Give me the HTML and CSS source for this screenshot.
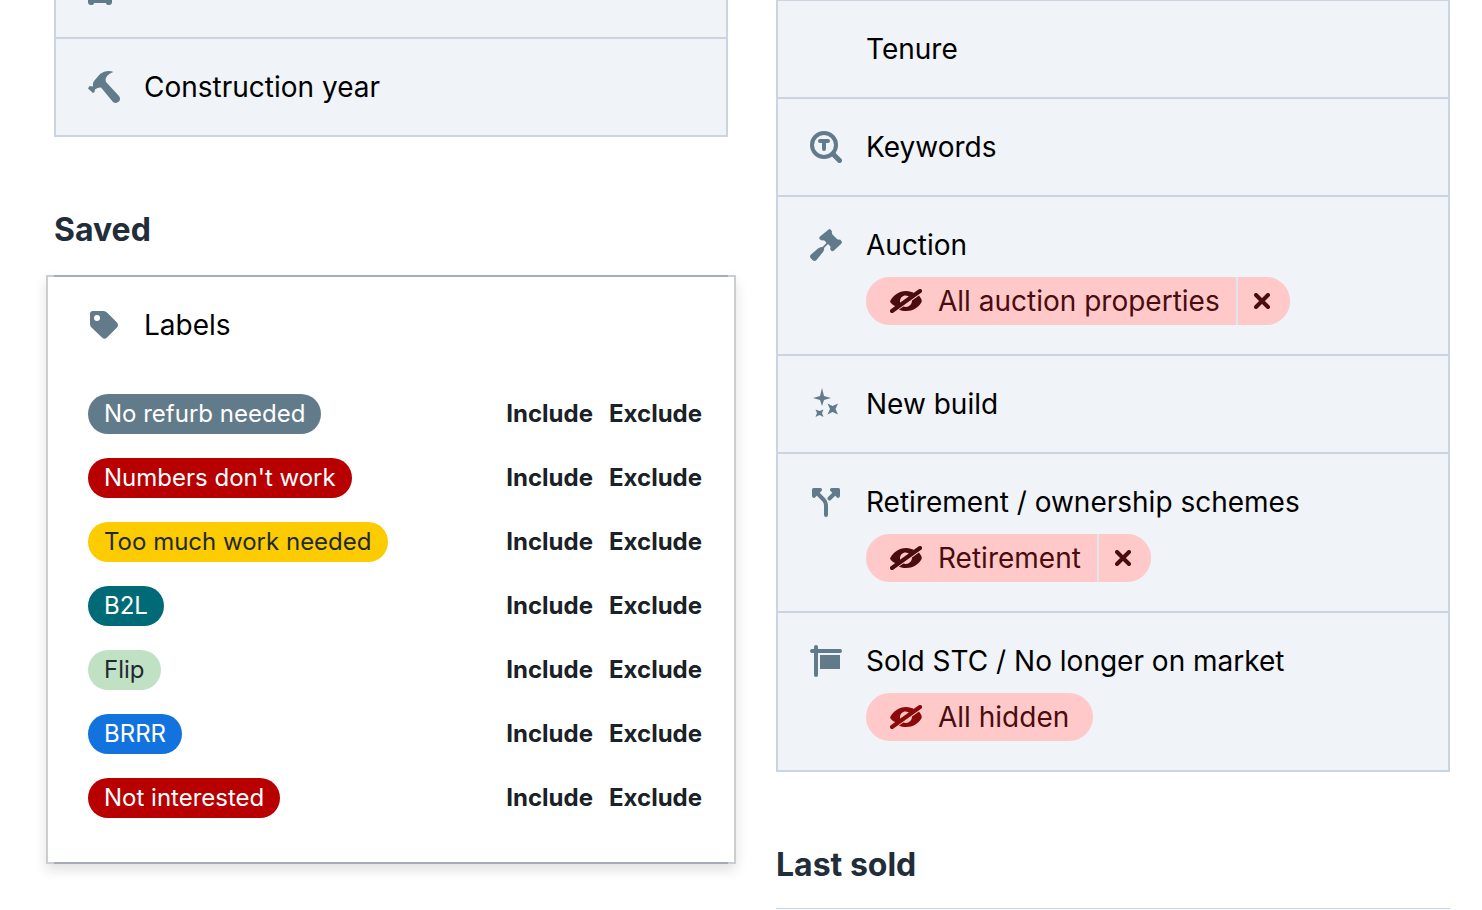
FILE: index.html
```
<!DOCTYPE html>
<html lang="en">
<head>
  <meta charset="UTF-8">
  <title>Filters</title>
  <meta name="viewport" content="width=device-width">
  <link rel="stylesheet" href="styles.css">
</head>
<body>
<svg class="sprite" aria-hidden="true">
  <symbol id="hidden" viewBox="0 0 32 24">
    <path d="M0 12.500C3 6.500 9 2 16 2C19.500 2 22 3 24 4L20 8.500C16.500 4.500 10 6.500 10 12.500L10 15L4 20L5 17C3 16 1 14.500 0 12.500Z"/>
    <path d="M29 6.500L31 9.500Q32.500 12 31 14C28 18.500 23 22 16 22C13.500 22 11 21.500 9 20.500L13.500 17.500C18 19 22 16 22 11.500Z"/>
    <path d="M2 22L30 2" fill="none" stroke="currentColor" stroke-width="4" stroke-linecap="round"/>
  </symbol>
  <symbol id="cross" viewBox="0 0 16 16">
    <path d="M2 2L14 14M14 2L2 14" fill="none" stroke="currentColor" stroke-width="4" stroke-linecap="round"/>
  </symbol>
</svg>
<main>
  <div class="column">
    <ul class="filters">
      <li>
        <svg class="icon" viewBox="0 0 32 32"><path d="M3 12L6 5Q7 3 9 3H15Q17 3 18 5L21 12Q24 14 24 17V29Q24 32 21 32Q18 32 18 30H6Q6 32 3 32Q0 32 0 29V17Q0 14 3 12Z"/></svg>
      </li>
      <li>
        <svg class="icon" viewBox="0 0 32 32"><path d="M12 3Q16 0 20 0Q24 0 25.500 1Q20 3 18.500 6Q17 8 18 11L31 25Q33 28 31 30.500Q28 33 25 31L13 16.500Q10 16 7 18.500L6.500 21L5 22L0 17.500L1.500 15L5 15.500Q4.500 12 6 10Z"/></svg>
        <h3>Construction year</h3>
      </li>
    </ul>
    <h2>Saved</h2>
    <section class="labels">
      <header>
        <svg class="icon" viewBox="0 0 32 32"><path fill-rule="evenodd" d="M5 2H15.500Q17.500 2 19 3.500L29 13.500Q31 16 29 18.500L19 28.500Q16.500 31 14 28.500L3.500 18.500Q2 17 2 15V5Q2 2 5 2ZM9 6A3 3 0 1 0 9 12A3 3 0 1 0 9 6Z"/></svg>
        <h3>Labels</h3>
      </header>
      <ul>
        <li><span class="label slate">No refurb needed</span><button>Include</button><button>Exclude</button></li>
        <li><span class="label red">Numbers don't work</span><button>Include</button><button>Exclude</button></li>
        <li><span class="label yellow">Too much work needed</span><button>Include</button><button>Exclude</button></li>
        <li><span class="label teal">B2L</span><button>Include</button><button>Exclude</button></li>
        <li><span class="label green">Flip</span><button>Include</button><button>Exclude</button></li>
        <li><span class="label blue">BRRR</span><button>Include</button><button>Exclude</button></li>
        <li><span class="label red">Not interested</span><button>Include</button><button>Exclude</button></li>
      </ul>
    </section>
  </div>

  <div class="column right">
    <ul class="filters">
      <li>
        <span class="icon"></span>
        <h3>Tenure</h3>
      </li>
      <li>
        <svg class="icon" viewBox="0 0 32 32"><g fill="none" stroke="currentColor" stroke-width="4" stroke-linecap="round"><circle cx="14" cy="14" r="12"/><path d="M23 23L29.500 29.500" stroke-width="5"/><path d="M10 10H18M14 10V18"/></g></svg>
        <h3>Keywords</h3>
      </li>
      <li>
        <svg class="icon" viewBox="0 0 32 32"><path d="M18 1Q19.500 -1 21 1L22 2.500Q21.500 4 22.500 5.500L27 10Q28.500 11 30 10.500L31.500 12Q32.500 13.500 31 15L24 21.500Q22.500 23 21 21.500L20 20Q21 18.500 20 17L18 15L14 19Q14.500 21 13 23L6.500 31Q4.500 33 2.500 31L1 29.500Q-1 27.500 1 25.500L8 19.500Q10.500 17.500 12.500 18L16.500 14L15 12Q13.500 11 12 11.500L10 10.500Q8.500 9 10 7.500Z"/></svg>
        <div>
          <h3>Auction</h3>
          <div class="chip">
            <span><svg class="eye"><use href="#hidden"/></svg>All auction properties</span>
            <button aria-label="Remove"><svg class="cross"><use href="#cross"/></svg></button>
          </div>
        </div>
      </li>
      <li>
        <svg class="icon" viewBox="0 0 32 32"><path d="M12 0L14 8L21 10L14 12L12 18L10 12L3 10L10 8ZM17.500 15.500L22.500 18L28 15.500L25.500 21L28 26.500L22.500 24L17.500 26.500L20 21ZM5.500 21.500L9.500 23L13.500 21.500L12 25L13.500 29L9.500 27L5.500 29L7 25Z"/></svg>
        <h3>New build</h3>
      </li>
      <li>
        <svg class="icon" viewBox="0 0 32 32"><path d="M3.500 2H10.500Q13 3 11.500 5L4.500 12Q2 12 2 10V3.500Q2 2 3.500 2ZM28.500 2H21.500Q19 3 20.500 5L27.500 12Q30 12 30 10V3.500Q30 2 28.500 2Z"/><path d="M6 6L13.500 13.500Q16 16 16 19V29M19.500 12.500L26 6" fill="none" stroke="currentColor" stroke-width="4" stroke-linecap="round"/></svg>
        <div>
          <h3>Retirement / ownership schemes</h3>
          <div class="chip">
            <span><svg class="eye"><use href="#hidden"/></svg>Retirement</span>
            <button aria-label="Remove"><svg class="cross"><use href="#cross"/></svg></button>
          </div>
        </div>
      </li>
      <li>
        <svg class="icon" viewBox="0 0 32 32"><rect x="4" width="4" height="32" rx="2"/><rect y="4" width="32" height="4" rx="2"/><rect x="10" y="10" width="20" height="14"/></svg>
        <div>
          <h3>Sold STC / No longer on market</h3>
          <div class="chip all">
            <span><svg class="eye"><use href="#hidden"/></svg>All hidden</span>
          </div>
        </div>
      </li>
    </ul>
    <h2>Last sold</h2>
    <hr>
  </div>
</main>
</body>
</html>
```
FILE: styles.css
```
* {
  box-sizing: border-box;
}

body {
  font-family: Inter, "Liberation Sans", sans-serif;
  font-size: 28px;
  line-height: 32px;
  margin: 0;
  background: #fff;
  color: #000;
  overflow: hidden;
}

ul {
  list-style: none;
  margin: 0;
  padding: 0;
}

h2 {
  margin: 72px 0 22px;
  font-size: 32px;
  line-height: 42px;
  font-weight: 700;
  color: #222d3a;
}

h3 {
  margin: 0;
  font-size: inherit;
  font-weight: 400;
}

button {
  font: inherit;
  color: inherit;
  border: 0;
  padding: 0;
  background: none;
  cursor: pointer;
}

svg {
  fill: currentColor;
}

hr {
  margin: 0;
  border: 0;
  border-top: 1px solid #cbd5e1;
}

.sprite {
  position: absolute;
  width: 0;
  height: 0;
}

main {
  display: grid;
  grid-template-columns: 1fr 1fr;
  gap: 48px;
  margin-top: -61px;
  padding: 0 32px 0 54px;
}

.right {
  padding-top: 60px;
}

.filters {
  border: 2px solid #cbd5e1;
  background: #f0f3f8;
}

.filters li {
  display: flex;
  gap: 24px;
  min-height: 96px;
  padding: 32px 32px 29px;
}

.filters li + li {
  border-top: 2px solid #cbd5e1;
  min-height: 98px;
}

.icon {
  flex: none;
  width: 32px;
  height: 32px;
  color: #627b8a;
}

.chip {
  display: inline-flex;
  height: 48px;
  margin-top: 16px;
  gap: 2px;
  border-radius: 24px;
  overflow: hidden;
  background: #e2e5ea;
  color: #4a0c0e;
  vertical-align: top;
}

.chip span {
  display: flex;
  align-items: center;
  padding: 0 16px 0 24px;
  background: #ffc9c9;
}

.chip button {
  display: flex;
  align-items: center;
  padding: 0 20px 0 16px;
  background: #ffc9c9;
}

.chip.all span {
  padding-right: 24px;
}

.chip.all .eye {
  color: #8c0909;
}

.eye {
  width: 32px;
  height: 24px;
  margin-right: 16px;
}

.cross {
  width: 16px;
  height: 16px;
}

/* labels card sticks out of the column on both sides */
.labels {
  position: relative;
  margin: 24px -8px 0;
  padding: 0 32px 44px 40px;
  border: 2px solid #cbcdd0;
  box-shadow: 0 6px 12px rgba(0, 0, 0, .12);
}

.labels::before,
.labels::after {
  content: "";
  position: absolute;
  left: 6px;
  right: 6px;
  height: 2px;
  background: #a5acb7;
}

.labels::before {
  top: -2px;
}

.labels::after {
  bottom: -2px;
}

.labels header {
  display: flex;
  gap: 24px;
  padding: 32px 0 53px;
}

.labels ul {
  display: grid;
  gap: 24px;
}

.labels li {
  display: flex;
  align-items: center;
  gap: 16px;
  font-size: 24px;
}

.labels li button {
  font-weight: 700;
  color: #1a2127;
}

.label {
  margin-right: auto;
  padding: 0 16px;
  line-height: 40px;
  border-radius: 20px;
  font-weight: 400;
  color: #fff;
}

.slate { background: #627b8a; }
.red { background: #b80000; }
.yellow { background: #fccb00; color: #1f2933; }
.teal { background: #006b76; }
.green { background: #c1e1c5; color: #1f2933; }
.blue { background: #1273de; }
```
